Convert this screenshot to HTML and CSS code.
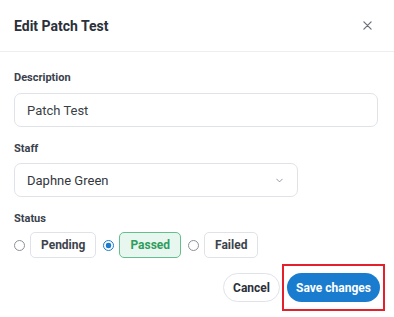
FILE: index.html
```html
<!DOCTYPE html>
<html lang="en">
<head>
    <meta charset="UTF-8">
    <meta name="viewport" content="width=device-width, initial-scale=1.0">
    <title>Edit Patch Test</title>
    <link rel="stylesheet" href="styles.css">
</head>
<body>
    <div class="modal">
        <div class="header">
            <h1 class="title">Edit Patch Test</h1>
            <button class="close-btn" aria-label="Close">
                <svg viewBox="0 0 10 10" width="9" height="9">
                    <path d="M1 1L9 9M9 1L1 9" stroke="currentColor" stroke-width="1.4" stroke-linecap="round"/>
                </svg>
            </button>
        </div>

        <div class="content">
            <div class="field">
                <label class="field-label" for="description">Description</label>
                <input class="text-input" id="description" type="text" value="Patch Test">
            </div>

            <div class="field field-staff">
                <label class="field-label">Staff</label>
                <div class="select">
                    <span>Daphne Green</span>
                    <svg class="chevron" viewBox="0 0 10 6" width="7" height="5">
                        <path d="M1 1L5 5L9 1" fill="none" stroke="currentColor" stroke-width="1.3" stroke-linecap="round" stroke-linejoin="round"/>
                    </svg>
                </div>
            </div>

            <div class="field field-status">
                <span class="field-label">Status</span>
                <div class="status-row">
                    <label class="status-option">
                        <span class="radio"></span>
                        <span class="chip">Pending</span>
                    </label>
                    <label class="status-option">
                        <span class="radio checked"></span>
                        <span class="chip chip-passed">Passed</span>
                    </label>
                    <label class="status-option">
                        <span class="radio"></span>
                        <span class="chip">Failed</span>
                    </label>
                </div>
            </div>
        </div>

        <div class="actions">
            <button class="btn btn-cancel">Cancel</button>
            <span class="highlight">
                <button class="btn btn-save">Save changes</button>
            </span>
        </div>
    </div>
</body>
</html>
```

FILE: styles.css
```css
:root {
    --text-dark: #2b303a;
    --label-color: #3a414d;
    --border-color: #dfe3e8;
    --blue: #1a7ccf;
    --green: #2f9d5e;
}

* {
    box-sizing: border-box;
}

body {
    margin: 0;
    background: #fff;
    font-family: Roboto, "Liberation Sans", sans-serif;
    color: var(--text-dark);
}

.modal {
    width: 394px;
    height: 317px;
    background: #fff;
}

.header {
    height: 52px;
    padding: 0 22px 0 14px;
    display: flex;
    align-items: center;
    justify-content: space-between;
    border-bottom: 1px solid #eceef1;
}

.title {
    margin: 0;
    font-size: 14px;
    font-weight: 700;
    color: var(--text-dark);
}

.close-btn {
    background: none;
    border: none;
    padding: 0;
    color: #6b717b;
    display: flex;
    cursor: pointer;
}

.content {
    padding: 19px 16px 0 14px;
}

.field {
    margin-bottom: 15px;
}

.field-label {
    display: block;
    font-size: 11px;
    line-height: 14px;
    font-weight: 700;
    color: var(--label-color);
    margin-bottom: 8px;
}

.text-input {
    width: 100%;
    height: 34px;
    padding: 0 12px;
    border: 1px solid var(--border-color);
    border-radius: 7px;
    font-family: inherit;
    font-size: 13px;
    color: #3b3f45;
    outline: none;
}

.field-staff .field-label {
    margin-bottom: 7px;
}

.select {
    width: 284px;
    height: 34px;
    padding: 0 14px 0 12px;
    border: 1px solid var(--border-color);
    border-radius: 7px;
    display: flex;
    align-items: center;
    justify-content: space-between;
    font-size: 13px;
    color: #33373d;
}

.chevron {
    color: #8a9099;
}

.field-status {
    margin-bottom: 0;
}

.field-status .field-label {
    margin-bottom: 6px;
}

.status-row {
    display: flex;
    gap: 7px;
}

.status-option {
    display: flex;
    align-items: center;
    gap: 5px;
}

.radio {
    width: 11px;
    height: 11px;
    border-radius: 50%;
    border: 1px solid #8c9199;
    background: #fff;
}

.radio.checked {
    border-color: var(--blue);
    background: radial-gradient(circle, var(--blue) 0 2.6px, #fff 3.1px);
}

.chip {
    height: 26px;
    padding: 0 10px;
    display: flex;
    align-items: center;
    border: 1px solid var(--border-color);
    border-radius: 5px;
    font-size: 12px;
    font-weight: 700;
    color: #3d434c;
    background: #fff;
}

.chip-passed {
    background: #e7f6ee;
    border-color: #63c08e;
    color: var(--green);
}

.actions {
    display: flex;
    justify-content: flex-end;
    align-items: center;
    gap: 2px;
    padding: 6px 9px 0 0;
}

.btn {
    height: 29px;
    border-radius: 15px;
    font-family: inherit;
    font-size: 12px;
    font-weight: 700;
    cursor: pointer;
}

.btn-cancel {
    width: 57px;
    background: #fff;
    border: 1px solid var(--border-color);
    color: var(--text-dark);
}

.highlight {
    display: flex;
    padding: 7px 3px;
    border: 2px solid #e3202b;
}

.btn-save {
    width: 93px;
    border: none;
    background: var(--blue);
    color: #fff;
}
```
